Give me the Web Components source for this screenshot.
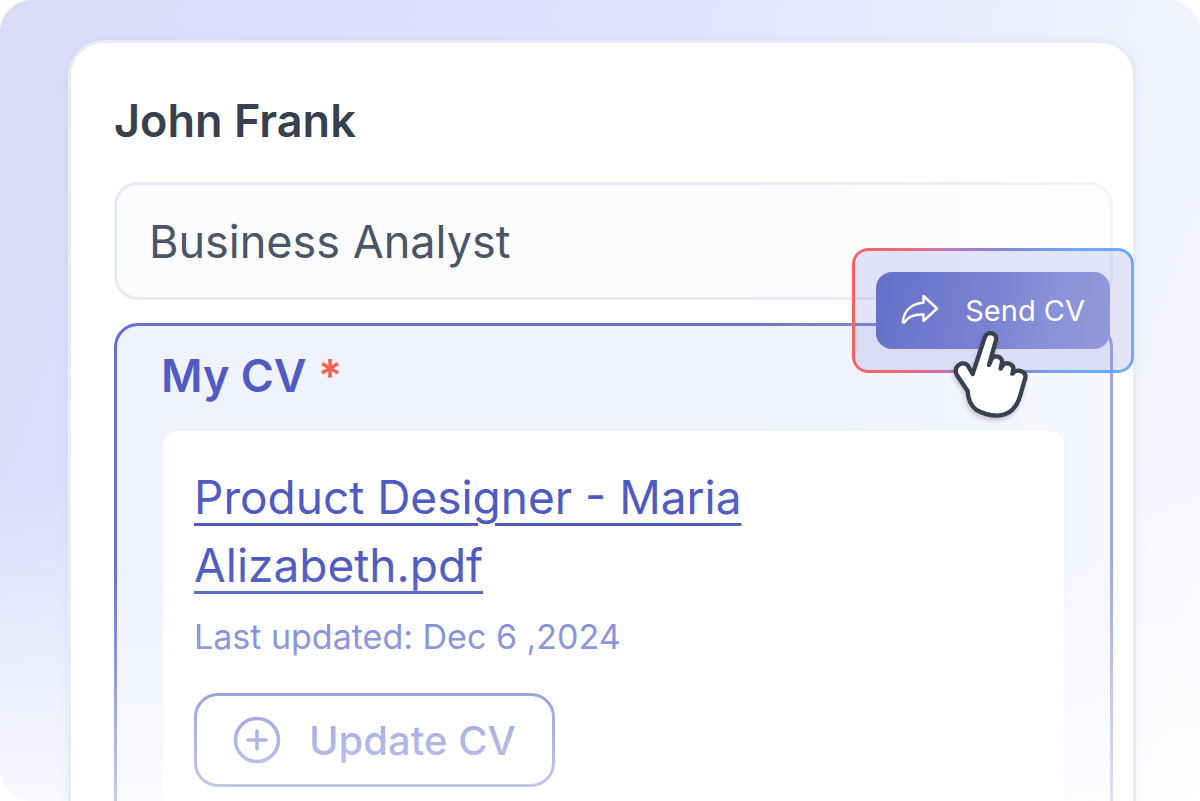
<!DOCTYPE html>
<html lang="en">
<head>
<meta charset="utf-8">
<meta name="viewport" content="width=device-width, initial-scale=1">
<title>John Frank - CV</title>
<style>
  body {
    margin: 0;
    background: #fff;
    font-family: Inter, "Liberation Sans", sans-serif;
    font-optical-sizing: none;
  }
</style>
</head>
<body>
<app-stage>
  <profile-card name="John Frank">
    <role-field value="Business Analyst"></role-field>
    <cv-panel heading="My CV">
      <cv-file name="Product Designer - Maria Alizabeth.pdf" updated="Dec 6 ,2024">
        <update-button>Update CV</update-button>
      </cv-file>
    </cv-panel>
    <send-callout slot="callout">Send CV</send-callout>
  </profile-card>
</app-stage>

<script>
// Small helper: open shadow root with the given markup.
function render(el, html) {
  el.attachShadow({ mode: 'open' }).innerHTML = html;
}

// Rounded backdrop that crops the card at the bottom.
class AppStage extends HTMLElement {
  constructor() {
    super();
    render(this, `
      <style>
        :host {
          display: block;
          box-sizing: border-box;
          height: 100vh;
          padding: 40px 64px 0 68px;
          overflow: hidden;
          border-radius: 32px;
          background:
            linear-gradient(to bottom, rgba(255,255,255,0) 60%, rgba(255,255,255,0.8) 100%),
            linear-gradient(110deg, #d9dcf5 0%, #dcdffc 20%, #e0e3ff 42%, #eceffd 70%, #f5f6fd 88%, #f9faff 100%);
        }
      </style>
      <slot></slot>
    `);
  }
}

class ProfileCard extends HTMLElement {
  constructor() {
    super();
    render(this, `
      <style>
        :host {
          display: block;
          position: relative;
          box-sizing: border-box;
          border: 3px solid #eaecf3;
          border-radius: 36px;
          background: #fff;
          box-shadow: 0 0 12px rgba(100, 110, 200, 0.07);
        }
        .content {
          display: flex;
          flex-direction: column;
          padding: 50px 20px 48px 43px;
        }
        h1 {
          margin: 0 0 33px;
          font-size: 45px;
          line-height: 56px;
          font-weight: 600;
          color: #37404f;
        }
        /* white veil towards the right and bottom edges */
        .veil {
          position: absolute;
          inset: 0;
          border-radius: 33px;
          pointer-events: none;
          background:
            linear-gradient(to bottom, rgba(255,255,255,0) 520px, rgba(255,255,255,0.66) 760px),
            linear-gradient(to right, rgba(255,255,255,0) 60%, rgba(255,255,255,0.42) 100%);
        }
      </style>
      <div class="content">
        <h1></h1>
        <slot></slot>
      </div>
      <div class="veil"></div>
      <slot name="callout"></slot>
    `);
    this.shadowRoot.querySelector('h1').textContent = this.getAttribute('name');
  }
}

class RoleField extends HTMLElement {
  constructor() {
    super();
    render(this, `
      <style>
        :host {
          display: block;
          margin-bottom: 23px;
        }
        input {
          display: block;
          box-sizing: border-box;
          width: 100%;
          height: 118px;
          padding: 0 32px;
          border: 3px solid #e8ebf2;
          border-radius: 24px;
          background: #fcfcff;
          color: #4a5568;
          font: inherit;
          font-size: 45px;
          outline: none;
        }
      </style>
      <input type="text" aria-label="Job title">
    `);
    this.shadowRoot.querySelector('input').value = this.getAttribute('value');
  }
}

class CvPanel extends HTMLElement {
  constructor() {
    super();
    render(this, `
      <style>
        :host {
          display: block;
          border: 3px solid #6571cc;
          border-radius: 24px;
          padding: 22px 44px 44px;
          background: #f0f3fd;
        }
        h2 {
          margin: 0 0 25px;
          font-size: 45px;
          line-height: 56px;
          font-weight: 600;
          color: #4f5bc2;
        }
        .required {
          color: #f56358;
        }
      </style>
      <h2><span class="title"></span> <span class="required">*</span></h2>
      <slot></slot>
    `);
    this.shadowRoot.querySelector('.title').textContent = this.getAttribute('heading');
  }
}

class CvFile extends HTMLElement {
  constructor() {
    super();
    render(this, `
      <style>
        :host {
          display: block;
          border: 2px solid #f1f2f7;
          border-radius: 16px;
          padding: 32px 31px;
          background: #fff;
        }
        a {
          display: block;
          max-width: 640px;
          font-size: 46px;
          line-height: 68px;
          color: #4f5bc2;
          text-decoration: underline;
          text-decoration-thickness: 3px;
          text-underline-offset: 9px;
        }
        p {
          margin: 14px 0 32px;
          font-size: 34px;
          line-height: 48px;
          color: #6d7ad2;
        }
      </style>
      <a href="#cv"></a>
      <p></p>
      <slot></slot>
    `);
    this.shadowRoot.querySelector('a').textContent = this.getAttribute('name');
    this.shadowRoot.querySelector('p').textContent = 'Last updated: ' + this.getAttribute('updated');
  }
}

class UpdateButton extends HTMLElement {
  constructor() {
    super();
    render(this, `
      <style>
        :host {
          display: block;
        }
        button {
          display: flex;
          align-items: center;
          gap: 28px;
          height: 94px;
          padding: 0 36px;
          border: 3px solid #6571cc;
          border-radius: 24px;
          background: #fff;
          color: #6571cc;
          font: inherit;
          font-size: 40px;
          font-weight: 500;
          cursor: pointer;
        }
        svg {
          flex: none;
        }
      </style>
      <button type="button">
        <svg width="48" height="48" viewBox="0 0 48 48" fill="none" stroke="currentColor" stroke-width="3.6" stroke-linecap="round" aria-hidden="true">
          <circle cx="24" cy="24" r="21.5"/>
          <path d="M24 15v18M15 24h18"/>
        </svg>
        <slot></slot>
      </button>
    `);
  }
}

// Highlighted "Send CV" action with the pointing hand.
class SendCallout extends HTMLElement {
  constructor() {
    super();
    render(this, `
      <style>
        :host {
          display: block;
          position: absolute;
          top: 205px;
          right: -1px;
          padding: 24px;
          border-radius: 16px;
          background: rgba(90, 100, 200, 0.17);
        }
        .ring {
          position: absolute;
          inset: 0;
          padding: 3px;
          border-radius: 16px;
          background: linear-gradient(to right, #f4625f 0%, #ee6a74 18%, #b878c0 36%, #8288d6 55%, #6ea8f8 78%, #6aaafa 100%);
          -webkit-mask: linear-gradient(#000 0 0) content-box, linear-gradient(#000 0 0);
          -webkit-mask-composite: xor;
          mask-composite: exclude;
          pointer-events: none;
        }
        button {
          display: flex;
          align-items: center;
          gap: 26px;
          height: 77px;
          padding: 0 25px;
          border: 0;
          border-radius: 16px;
          background: linear-gradient(100deg, #6570c8 0%, #7881d2 45%, #8a92d8 75%, #9299da 100%);
          color: #fff;
          font: inherit;
          font-size: 29px;
          cursor: pointer;
        }
        .hand {
          position: absolute;
          top: 72px;
          left: 88px;
          filter: drop-shadow(-1px 3px 2px rgba(70, 50, 90, 0.25));
          pointer-events: none;
        }
      </style>
      <div class="ring"></div>
      <button type="button">
        <svg width="38" height="32" viewBox="0 2 38 32" fill="none" stroke="currentColor" stroke-width="2.4" stroke-linejoin="round" aria-hidden="true">
          <path d="M22.5 3 36 15.500 22.500 28V21.500C13 21 7 24 3.600 29.200 3 30 1.800 29.800 1.900 28.500 3 17 11 10.500 22.500 9.700Z"/>
        </svg>
        <slot></slot>
      </button>
      <svg class="hand" width="100" height="110" viewBox="0 0 300 330" fill="#fff" stroke="#37414f" stroke-width="13" stroke-linejoin="round" stroke-linecap="round" aria-hidden="true">
        <path d="M98 162 135 50C142 32 173 38 168 60L147 135 154 118C162 102 188 110 186 126L182 146 188 136C198 123 222 133 220 148L217 161 222 156C236 146 260 156 256 173L242 222C230 268 202 286 172 287 150 287 126 280 108 269 92 256 84 238 83 213L51 166C38 140 66 120 83 136Z"/>
      </svg>
    `);
  }
}

customElements.define('app-stage', AppStage);
customElements.define('profile-card', ProfileCard);
customElements.define('role-field', RoleField);
customElements.define('cv-panel', CvPanel);
customElements.define('cv-file', CvFile);
customElements.define('update-button', UpdateButton);
customElements.define('send-callout', SendCallout);
</script>
</body>
</html>
